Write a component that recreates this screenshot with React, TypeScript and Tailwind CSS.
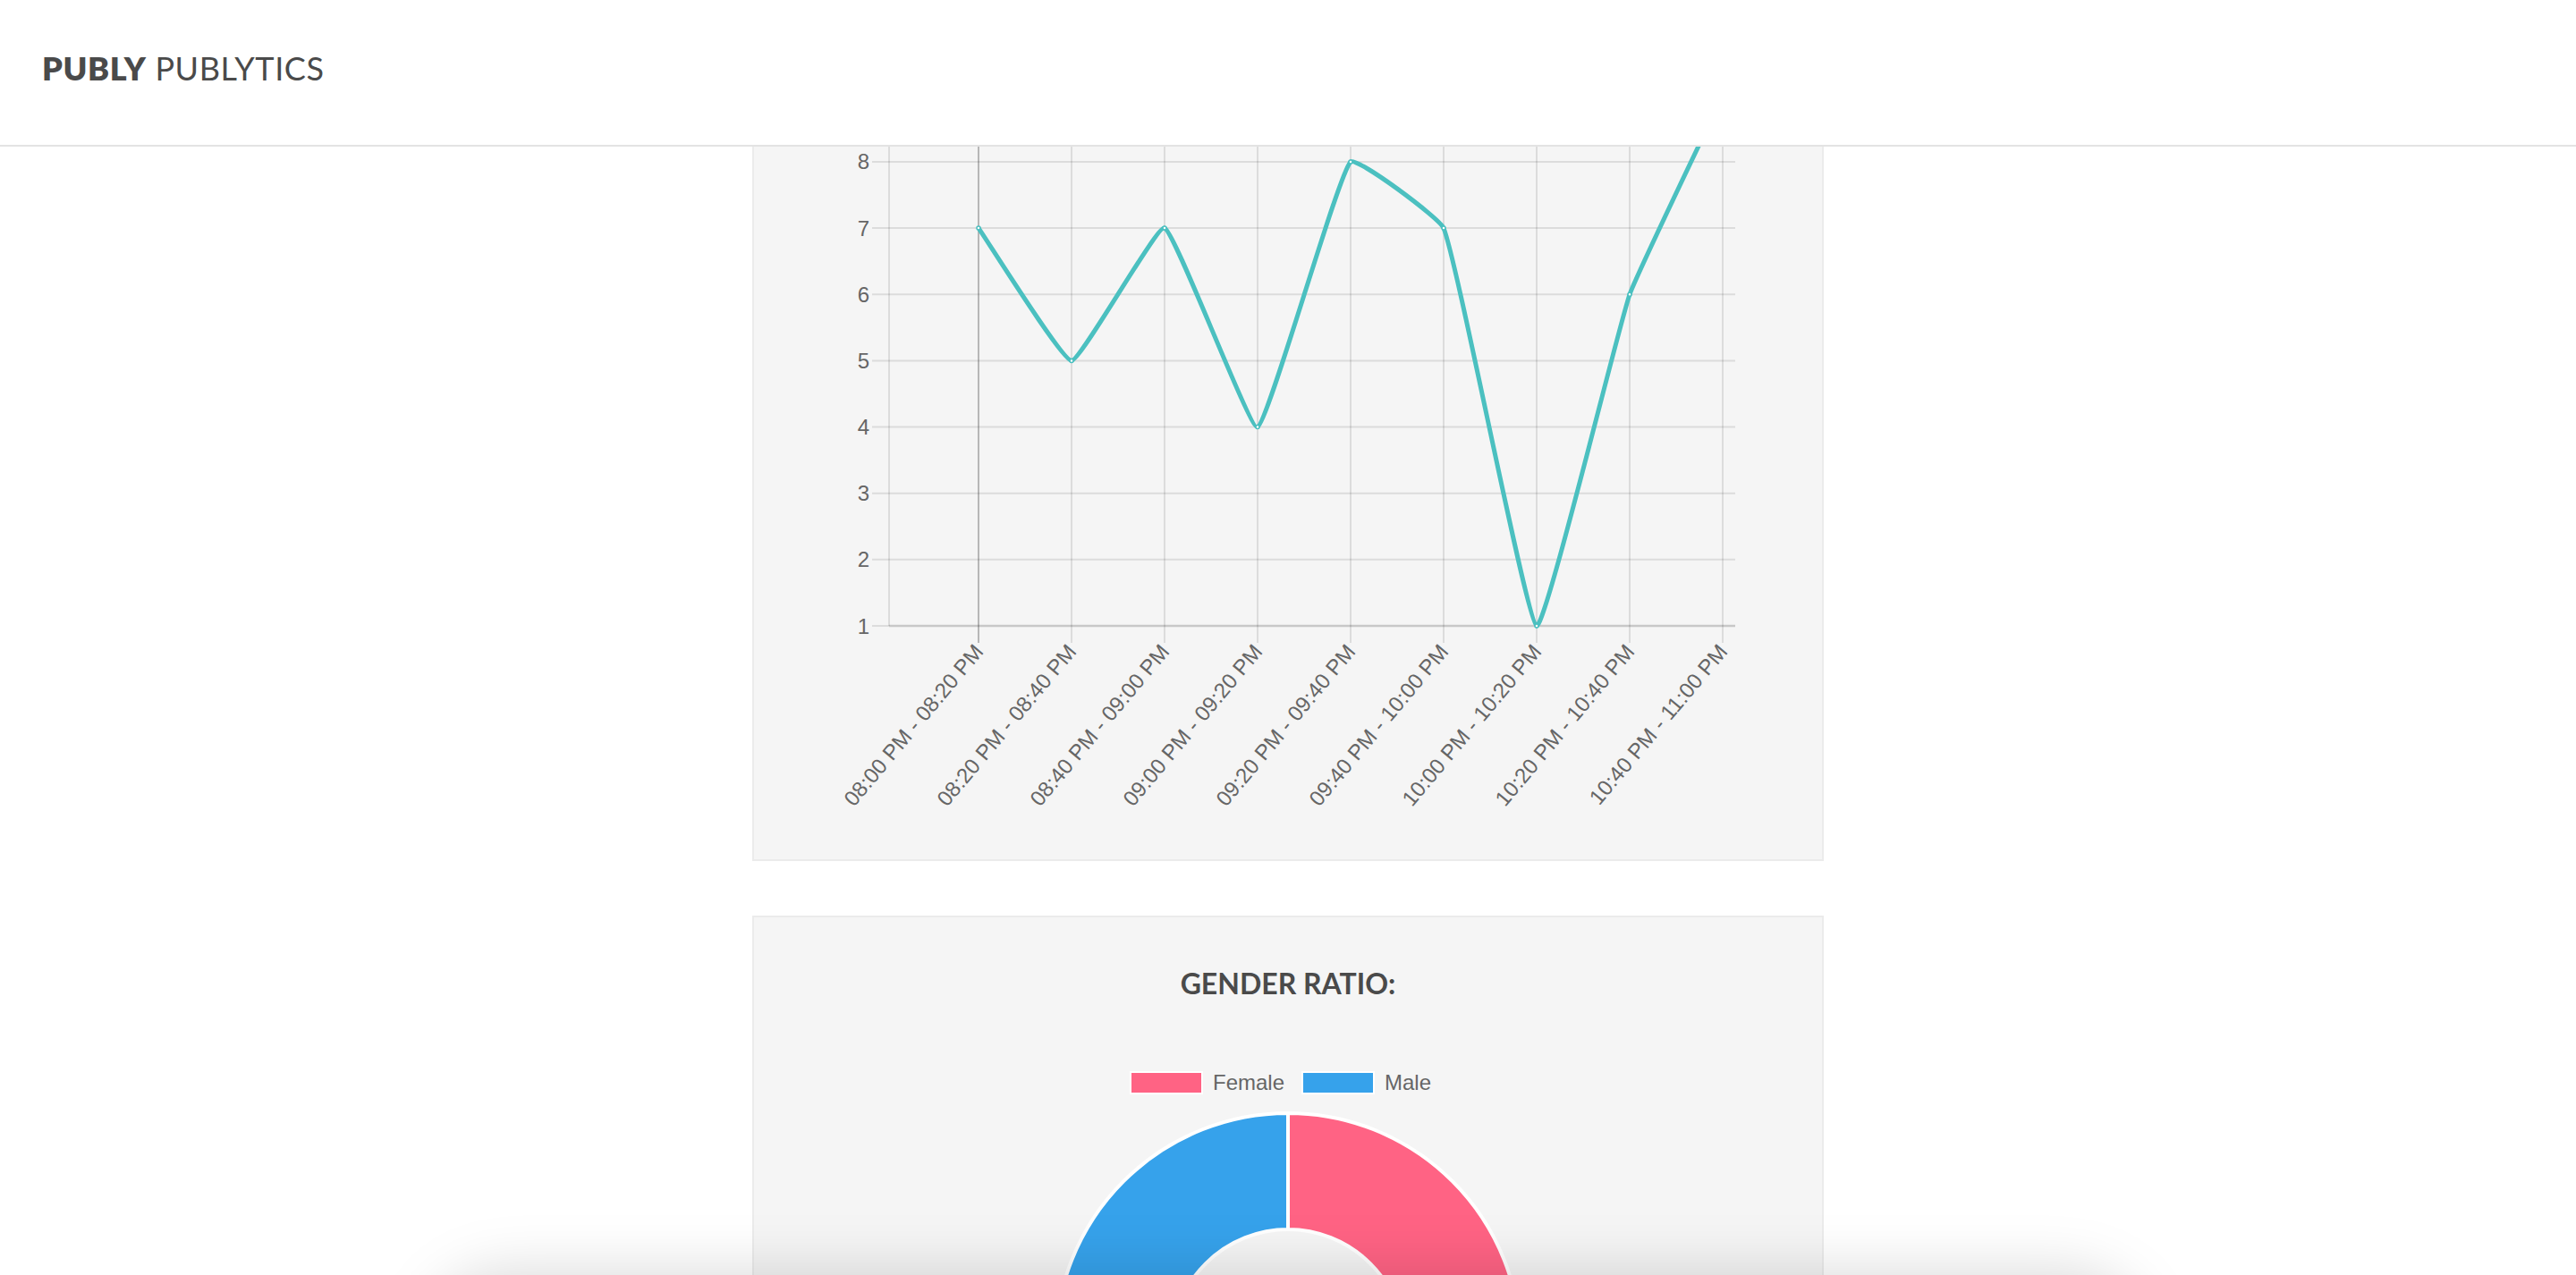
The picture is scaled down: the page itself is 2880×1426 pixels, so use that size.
import React from "react";

const LABELS = [
  "08:00 PM - 08:20 PM",
  "08:20 PM - 08:40 PM",
  "08:40 PM - 09:00 PM",
  "09:00 PM - 09:20 PM",
  "09:20 PM - 09:40 PM",
  "09:40 PM - 10:00 PM",
  "10:00 PM - 10:20 PM",
  "10:20 PM - 10:40 PM",
  "10:40 PM - 11:00 PM",
];
const VALUES = [7, 5, 7, 4, 8, 7, 1, 6, 9];
const X0 = 1094;
const DX = 104;
const Y1 = 700;
const DY = 74.15;
const yOf = (v: number) => Y1 - (v - 1) * DY;

type P = { x: number; y: number };

function linePath(pts: P[]) {
  const t = 0.1;
  const ctrl = pts.map((p, i) => {
    const prev = pts[i - 1] ?? p;
    const next = pts[i + 1] ?? p;
    const d01 = Math.hypot(p.x - prev.x, p.y - prev.y);
    const d12 = Math.hypot(next.x - p.x, next.y - p.y);
    let s01 = d01 / (d01 + d12);
    let s12 = d12 / (d01 + d12);
    if (isNaN(s01)) s01 = 0;
    if (isNaN(s12)) s12 = 0;
    const fa = t * s01;
    const fb = t * s12;
    return {
      prev: { x: p.x - fa * (next.x - prev.x), y: p.y - fa * (next.y - prev.y) },
      next: { x: p.x + fb * (next.x - prev.x), y: p.y + fb * (next.y - prev.y) },
    };
  });
  let d = `M${pts[0].x},${pts[0].y}`;
  for (let i = 1; i < pts.length; i++) {
    d += ` C${ctrl[i - 1].next.x},${ctrl[i - 1].next.y} ${ctrl[i].prev.x},${ctrl[i].prev.y} ${pts[i].x},${pts[i].y}`;
  }
  return d;
}

function LineChart() {
  const pts = VALUES.map((v, i) => ({ x: X0 + i * DX, y: yOf(v) }));
  const vx = [994, ...LABELS.map((_, i) => X0 + i * DX)];
  const font = "'Liberation Sans', Arial, sans-serif";
  const ticks = [1, 2, 3, 4, 5, 6, 7, 8];
  return (
    <svg width={1194} height={797} viewBox="843 164 1194 797" className="block">
      {ticks.map((v) => (
        <line
          key={v}
          x1={975}
          x2={1940}
          y1={yOf(v)}
          y2={yOf(v)}
          stroke="rgba(0,0,0,0.1)"
          strokeWidth={2}
        />
      ))}
      <line x1={994} x2={1940} y1={Y1} y2={Y1} stroke="rgba(0,0,0,0.09)" strokeWidth={3} />
      {vx.map((x, i) => (
        <line
          key={i}
          x1={x}
          x2={x}
          y1={164}
          y2={i === 0 ? Y1 : 719}
          stroke={i === 1 ? "rgba(0,0,0,0.25)" : "rgba(0,0,0,0.1)"}
          strokeWidth={2}
        />
      ))}
      {ticks.map((v) => (
        <text
          key={v}
          x={972}
          y={yOf(v)}
          textAnchor="end"
          dominantBaseline="central"
          fill="#666"
          fontSize={24}
          fontFamily={font}
        >
          {v}
        </text>
      ))}
      {LABELS.map((l, i) => (
        <text
          key={l}
          transform={`translate(${X0 + i * DX},724) rotate(-50)`}
          textAnchor="end"
          dominantBaseline="central"
          fill="#666"
          fontSize={24}
          fontFamily={font}
        >
          {l}
        </text>
      ))}
      <path d={linePath(pts)} fill="none" stroke="#4bc0c0" strokeWidth={5} strokeLinejoin="round" />
      {pts.map((p, i) => (
        <circle key={i} cx={p.x} cy={p.y} r={2} fill="#fff" stroke="#4bc0c0" strokeWidth={1.5} />
      ))}
    </svg>
  );
}

function Donut() {
  const cx = 1440;
  const cy = 1505;
  const R = 260;
  const r = 130;
  const female = `M${cx},${cy - R} A${R} ${R} 0 0 1 ${cx},${cy + R} L${cx},${cy + r} A${r} ${r} 0 0 0 ${cx},${cy - r} Z`;
  const male = `M${cx},${cy + R} A${R} ${R} 0 0 1 ${cx},${cy - R} L${cx},${cy - r} A${r} ${r} 0 0 0 ${cx},${cy + r} Z`;
  return (
    <svg width={1194} height={600} viewBox="843 1223 1194 600" className="block">
      <path d={female} fill="#ff6384" stroke="#fff" strokeWidth={4} />
      <path d={male} fill="#36a2eb" stroke="#fff" strokeWidth={4} />
    </svg>
  );
}

export default function App() {
  return (
    <div className="relative h-[1426px] w-full overflow-hidden bg-white">
      <header className="h-[164px] border-b-2 border-[#e3e3e3] bg-white pl-[47px] pt-[58px]">
        <div
          className="text-[36px] leading-[37px] tracking-[0.6px] text-[#4a4a4a]"
          style={{ fontFamily: "Lato, 'Open Sans', sans-serif" }}
        >
          <span className="font-extrabold">PUBLY</span> <span className="font-normal">PUBLYTICS</span>
        </div>
      </header>

      <main className="mx-auto w-[1198px]">
        <section className="h-[799px] border-x-2 border-b-2 border-[#ebebeb] bg-[#f5f5f5]">
          <LineChart />
        </section>

        <section className="mt-[61px] h-[800px] border-2 border-[#ebebeb] bg-[#f5f5f5] pt-[54px]">
          <h2
            className="text-center text-[32px] font-bold leading-[40px] text-[#4a4a4a]"
            style={{ fontFamily: "Lato, 'Open Sans', sans-serif" }}
          >
            GENDER RATIO:
          </h2>
          <div
            className="mt-[78px] flex h-[26px] items-center justify-center pl-[2px] text-[24px] leading-[26px] text-[#666]"
            style={{ fontFamily: "'Liberation Sans', Arial, sans-serif" }}
          >
            <div className="flex items-center pr-[19px]">
              <span className="h-[26px] w-[82px] border-2 border-white bg-[#ff6384]" />
              <span className="ml-[11px]">Female</span>
            </div>
            <div className="flex items-center pr-[19px]">
              <span className="h-[26px] w-[82px] border-2 border-white bg-[#36a2eb]" />
              <span className="ml-[11px]">Male</span>
            </div>
          </div>
          <div className="-mt-px">
            <Donut />
          </div>
        </section>
      </main>

      <div className="pointer-events-none absolute left-[470px] top-[1418px] h-[220px] w-[1936px] rounded-[100px] bg-black/[0.13] blur-[30px]" />
    </div>
  );
}
